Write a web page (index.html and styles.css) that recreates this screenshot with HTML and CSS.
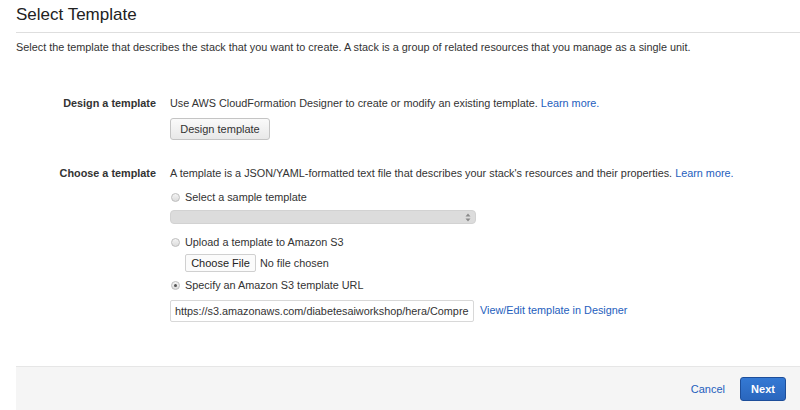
FILE: index.html
```html
<!DOCTYPE html>
<html>
<head>
<meta charset="utf-8">
<link rel="stylesheet" href="styles.css">
</head>
<body>
<div class="page">
  <h1 class="title">Select Template</h1>
  <p class="intro">Select the template that describes the stack that you want to create. A stack is a group of related resources that you manage as a single unit.</p>

  <div class="form">
    <div class="row">
      <div class="label">Design a template</div>
      <div class="field">
        <div class="desc">Use AWS CloudFormation Designer to create or modify an existing template. <a class="link">Learn more.</a></div>
        <button class="btn">Design template</button>
      </div>
    </div>

    <div class="row row-choose">
      <div class="label">Choose a template</div>
      <div class="field">
        <div class="desc">A template is a JSON/YAML-formatted text file that describes your stack's resources and their properties. <a class="link">Learn more.</a></div>
        <label class="radio"><span class="dot"></span>Select a sample template</label>
        <div class="select"><span class="arrows">
          <svg width="6" height="9" viewBox="0 0 6 9"><path d="M3 0.5 L5.5 3.5 H0.5 Z M3 8.5 L5.5 5.5 H0.5 Z" fill="#8a8a8a"/></svg>
        </span></div>
        <label class="radio radio-upload"><span class="dot"></span>Upload a template to Amazon S3</label>
        <div class="file"><span class="file-btn">Choose File</span><span class="file-none">No file chosen</span></div>
        <label class="radio radio-url"><span class="dot checked"></span>Specify an Amazon S3 template URL</label>
        <div class="url-row">
          <div class="input">https://s3.amazonaws.com/diabetesaiworkshop/hera/Compre</div>
          <a class="link">View/Edit template in Designer</a>
        </div>
      </div>
    </div>
  </div>

  <div class="footer">
    <a class="link cancel">Cancel</a>
    <button class="next">Next</button>
  </div>
</div>
</body>
</html>
```

FILE: styles.css
```css
* { box-sizing: border-box; }
html, body {
  margin: 0;
  padding: 0;
  background: #fff;
  width: 800px;
  height: 410px;
  overflow: hidden;
}
body {
  font-family: "Liberation Sans", Arial, sans-serif;
  color: #333;
  font-size: 10.85px;
}
.page {
  padding-left: 16px;
  display: flex;
  flex-direction: column;
  height: 410px;
}
.title {
  margin: 0;
  font-weight: normal;
  font-size: 17px;
  line-height: 24px;
  padding-top: 3px;
  padding-bottom: 5px;
  border-bottom: 1px solid #dedede;
  color: #222;
}
.intro {
  margin: 0;
  padding-top: 7px;
  line-height: 14px;
  color: #333;
}
.form {
  margin-top: 42px;
  display: flex;
  flex-direction: column;
  flex: 1;
}
.row {
  display: flex;
}
.row-choose {
  margin-top: 26px;
}
.label {
  width: 140px;
  text-align: right;
  font-weight: bold;
  line-height: 14px;
  color: #333;
}
.field {
  margin-left: 14px;
  display: flex;
  flex-direction: column;
  align-items: flex-start;
}
.desc {
  line-height: 14px;
}
.link {
  color: #1e5ebd;
  text-decoration: none;
}
.btn {
  margin-top: 8px;
  width: 100px;
  height: 22px;
  font-family: inherit;
  font-size: 11px;
  color: #333;
  border: 1px solid #c4c4c4;
  border-radius: 3px;
  background: linear-gradient(#fafafa, #e8e8e8);
  padding: 0;
}
.radio {
  display: flex;
  align-items: center;
  margin-top: 10px;
  line-height: 14px;
}
.radio-upload { margin-top: 11px; }
.radio-url { margin-top: 6px; }
.dot {
  width: 9px;
  height: 9px;
  border-radius: 50%;
  border: 1px solid #bdbdbd;
  background: linear-gradient(#f4f4f4, #dcdcdc);
  margin-left: 1px;
  margin-right: 5px;
  position: relative;
}
.dot.checked::after {
  content: "";
  position: absolute;
  left: 2px;
  top: 2px;
  width: 3px;
  height: 3px;
  border-radius: 50%;
  background: #555;
}
.select {
  margin-top: 6px;
  width: 306px;
  height: 14px;
  border-radius: 4px;
  background: #dcdcdc;
  border: 1px solid #d2d2d2;
  display: flex;
  justify-content: flex-end;
  align-items: center;
  padding-right: 4px;
}
.arrows { display: flex; }
.file {
  margin-top: 5px;
  margin-left: 15px;
  display: flex;
  align-items: center;
}
.file-btn {
  height: 18px;
  width: 71px;
  line-height: 16px;
  border: 1px solid #d0d0d0;
  border-radius: 2px;
  background: #fbfbfb;
  text-align: center;
  color: #222;
  font-size: 11px;
}
.file-none {
  margin-left: 4px;
  color: #333;
}
.url-row {
  margin-top: 8px;
  display: flex;
  align-items: center;
}
.input {
  width: 304px;
  height: 22px;
  border: 1px solid #d8d8d8;
  border-radius: 2px;
  padding-left: 4px;
  line-height: 20px;
  white-space: nowrap;
  overflow: hidden;
  color: #333;
}
.url-row .link {
  margin-left: 6px;
  margin-top: -2px;
}
.footer {
  height: 44px;
  background: #f5f5f5;
  border-top: 1px solid #e6e6e6;
  display: flex;
  justify-content: flex-end;
  align-items: center;
  padding-right: 14px;
}
.cancel {
  margin-right: 15px;
  font-size: 11px;
}
.next {
  width: 46px;
  height: 24px;
  border-radius: 3px;
  border: 1px solid #1d4e9a;
  background: linear-gradient(#3479d4, #2a66bd);
  color: #fff;
  font-family: inherit;
  font-weight: bold;
  font-size: 11px;
  padding: 0;
}
```
